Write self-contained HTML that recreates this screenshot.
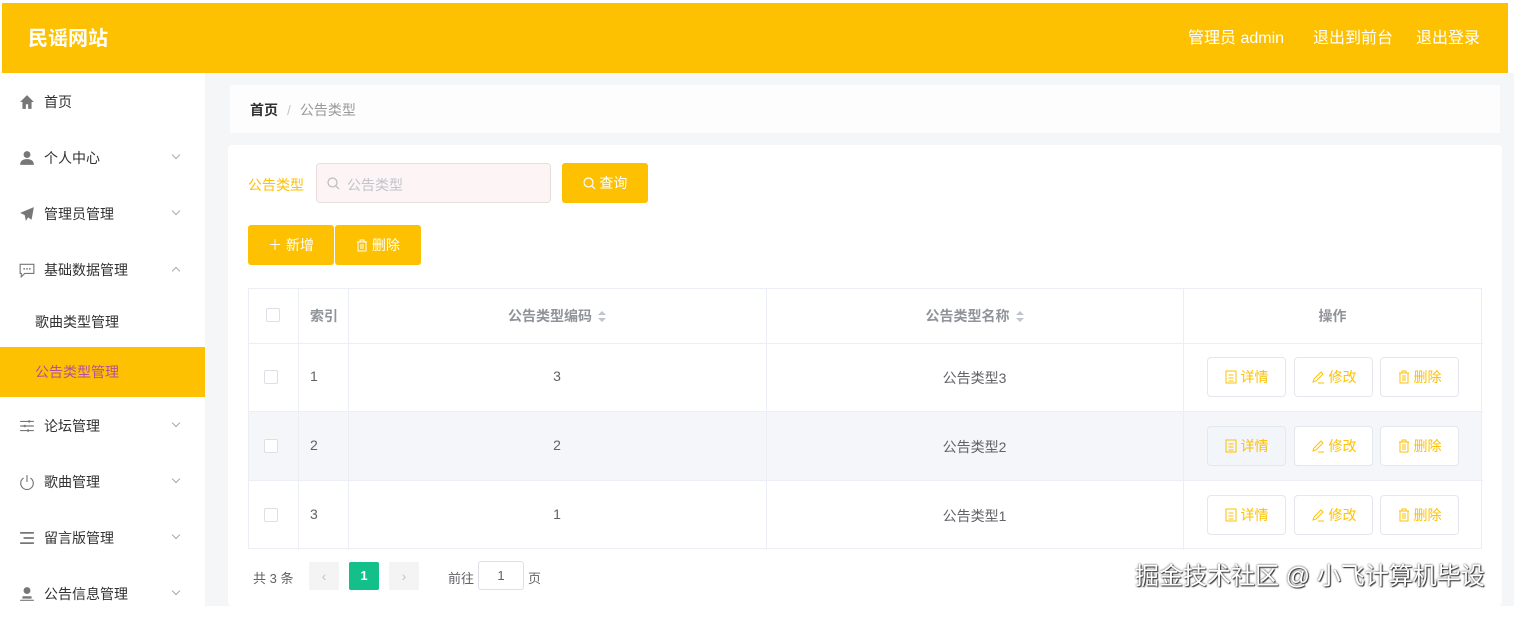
<!DOCTYPE html>
<html><head><meta charset="utf-8"><style>
*{box-sizing:border-box;margin:0;padding:0}
body{width:1514px;height:606px;overflow:hidden;background:#fff;font-family:"Liberation Sans","Noto Sans CJK SC",sans-serif;font-size:14px;color:#606266;position:relative}
.abs{position:absolute}
.hdr{left:2px;top:3px;width:1506px;height:70px;background:#fdc102}
.logo{left:28px;top:22px;color:#fff;font-size:20px;font-weight:bold}
.hr{top:24px;color:#fff;font-size:16px}
.side{left:0;top:73px;width:205px;height:533px;background:#fff}
.mi{position:absolute;left:0;width:205px;height:50px;line-height:50px;color:#303133;font-size:14px}
.mi .ic{position:absolute;left:19px;top:17px;width:16px;height:16px}
.mi .t{position:absolute;left:44px}
.mi .ar{position:absolute;left:173px;top:19px;width:6px;height:6px;border-right:1px solid #aaa;border-bottom:1px solid #aaa;transform:rotate(45deg)}
.mi .up{transform:rotate(-135deg);top:23px}
.main{left:205px;top:73px;width:1309px;height:533px;background:#f5f6f8}
.bc{left:230px;top:85px;width:1270px;height:48px;background:#fdfdfe}
.card{left:228px;top:145px;width:1274px;height:461px;background:#fff;border-radius:4px}
.btn{position:absolute;background:#fdc102;color:#fff;border-radius:3px;text-align:center;font-size:14px}
.tbl{left:248px;top:288px;width:1234px;height:261px;border:1px solid #ebeef5}
.vl{position:absolute;top:0;width:1px;height:261px;background:#ebeef5}
.hl{position:absolute;left:0;width:1234px;height:1px;background:#ebeef5}
.cb{position:absolute;width:14px;height:14px;border:1px solid #dcdfe6;border-radius:2px;background:#fff}
.cell{position:absolute;font-size:14px;color:#606266}
.ob{position:absolute;width:79px;height:40px;border:1px solid #e4e7ed;border-radius:4px;background:#fff;color:#fdc102;font-size:14px;line-height:38px;text-align:center}
.ob svg{vertical-align:-2px;margin-right:4px}
.sort{display:inline-block;vertical-align:middle;margin-left:6px;width:8px;height:12px;position:relative}
.sort:before{content:"";position:absolute;left:0;top:0;border:4px solid transparent;border-bottom:4px solid #c0c4cc;border-top:0}
.sort:after{content:"";position:absolute;left:0;top:7px;border:4px solid transparent;border-top:4px solid #c0c4cc;border-bottom:0}
</style></head><body>
<div class="abs hdr"></div>
<div class="abs logo">民谣网站</div>
<div class="abs hr" style="left:1188px">管理员 admin</div>
<div class="abs hr" style="left:1313px">退出到前台</div>
<div class="abs hr" style="left:1416px">退出登录</div>

<div class="abs side">
<div class="mi" style="top:4px"><svg class="ic" viewBox="0 0 14 14"><path d="M7 1L1 7h2v6h3V9h2v4h3V7h2z" fill="#777"/></svg><span class="t">首页</span></div>
<div class="mi" style="top:60px"><svg class="ic" viewBox="0 0 14 14"><circle cx="7" cy="4" r="3" fill="#777"/><path d="M1 13c0-4 3-5 6-5s6 1 6 5z" fill="#777"/></svg><span class="t">个人中心</span><i class="ar"></i></div>
<div class="mi" style="top:116px"><svg class="ic" viewBox="0 0 14 14"><path d="M13 1L1 6l4 2 1 5 2-3 3 2z" fill="#777"/></svg><span class="t">管理员管理</span><i class="ar"></i></div>
<div class="mi" style="top:172px"><svg class="ic" viewBox="0 0 14 14"><path d="M1 2h12v8H5l-3 3V10H1z" fill="none" stroke="#777"/><circle cx="4.5" cy="6" r=".8" fill="#777"/><circle cx="7" cy="6" r=".8" fill="#777"/><circle cx="9.5" cy="6" r=".8" fill="#777"/></svg><span class="t">基础数据管理</span><i class="ar up"></i></div>
<div class="mi" style="top:224px"><span class="t" style="left:35px">歌曲类型管理</span></div>
<div class="mi" style="top:274px;background:#fdc102;color:#b450a0"><span class="t" style="left:35px">公告类型管理</span></div>
<div class="mi" style="top:328px"><svg class="ic" viewBox="0 0 14 14"><path d="M1 3h12M1 7h12M1 11h12" stroke="#777"/><path d="M9 2v2M5 6v2M8 10v2" stroke="#777" stroke-width="1.5"/></svg><span class="t">论坛管理</span><i class="ar"></i></div>
<div class="mi" style="top:384px"><svg class="ic" viewBox="0 0 14 14"><path d="M4 3.5A5.5 5.5 0 1 0 10 3.5" fill="none" stroke="#777"/><path d="M7 1v6" stroke="#777"/></svg><span class="t">歌曲管理</span><i class="ar"></i></div>
<div class="mi" style="top:440px"><svg class="ic" viewBox="0 0 14 14"><path d="M1 2.5h12M4 7h9M1 11.5h12" stroke="#777" stroke-width="1.6"/></svg><span class="t">留言版管理</span><i class="ar"></i></div>
<div class="mi" style="top:496px"><svg class="ic" viewBox="0 0 14 14"><circle cx="7" cy="4" r="3" fill="#777"/><path d="M3 9h8v2H3zM1 12h12v1H1z" fill="#777"/></svg><span class="t">公告信息管理</span><i class="ar"></i></div>
</div>

<div class="abs main"></div>
<div class="abs bc"></div>
<div class="abs" style="left:250px;top:100px;font-size:14px"><b style="color:#303133">首页</b><span style="color:#c0c4cc;margin:0 9px">/</span><span style="color:#999">公告类型</span></div>
<div class="abs card"></div>

<div class="abs" style="left:248px;top:175px;color:#fdc102;font-size:14px">公告类型</div>
<div class="abs" style="left:316px;top:163px;width:235px;height:40px;background:#fdf5f5;border:1px solid #e8dede;border-radius:4px"></div>
<svg class="abs" style="left:327px;top:177px" width="13" height="13" viewBox="0 0 13 13"><circle cx="5.5" cy="5.5" r="4.5" fill="none" stroke="#bbb" stroke-width="1.2"/><path d="M9 9l3 3" stroke="#bbb" stroke-width="1.2"/></svg>
<div class="abs" style="left:347px;top:175px;color:#c0c4cc;font-size:14px">公告类型</div>
<div class="btn" style="left:562px;top:163px;width:86px;height:40px;line-height:40px">
<svg width="13" height="13" viewBox="0 0 13 13" style="vertical-align:-2px"><circle cx="5.5" cy="5.5" r="4.5" fill="none" stroke="#fff" stroke-width="1.2"/><path d="M9 9l3 3" stroke="#fff" stroke-width="1.2"/></svg> 查询</div>
<div class="btn" style="left:248px;top:225px;width:86px;height:40px;line-height:40px">＋ 新增</div>
<div class="btn" style="left:335px;top:225px;width:86px;height:40px;line-height:40px">
<svg width="12" height="13" viewBox="0 0 12 13" style="vertical-align:-2px"><path d="M1 3h10M4 3V1h4v2M2 3v9h8V3M5 5v5M7 5v5" fill="none" stroke="#fff"/></svg> 删除</div>

<div class="abs tbl">
<div class="vl" style="left:49px"></div><div class="vl" style="left:99px"></div><div class="vl" style="left:517px"></div><div class="vl" style="left:934px"></div>
<div class="hl" style="top:54px"></div><div class="hl" style="top:122px"></div><div class="hl" style="top:191px"></div>
<div class="abs" style="left:0;top:123px;width:1232px;height:68px;background:#f4f6f9"></div>
<div class="abs" style="left:49px;top:123px;width:1px;height:68px;background:#ebeef5"></div><div class="abs" style="left:99px;top:123px;width:1px;height:68px;background:#ebeef5"></div><div class="abs" style="left:517px;top:123px;width:1px;height:68px;background:#ebeef5"></div><div class="abs" style="left:934px;top:123px;width:1px;height:68px;background:#ebeef5"></div>
</div>
<div class="cb" style="left:266px;top:308px"></div>
<div class="cell" style="left:310px;top:306px;font-weight:bold;color:#909399">索引</div>
<div class="cell" style="left:348px;width:418px;text-align:center;top:306px;font-weight:bold;color:#909399">公告类型编码<i class="sort"></i></div>
<div class="cell" style="left:766px;width:417px;text-align:center;top:306px;font-weight:bold;color:#909399">公告类型名称<i class="sort"></i></div>
<div class="cell" style="left:1183px;width:299px;text-align:center;top:306px;font-weight:bold;color:#909399">操作</div>

<div class="cb" style="left:264px;top:370px"></div><div class="cell" style="left:310px;top:368px">1</div>
<div class="cell" style="left:348px;width:418px;text-align:center;top:368px">3</div>
<div class="cell" style="left:766px;width:417px;text-align:center;top:368px">公告类型3</div>
<div class="cb" style="left:264px;top:439px"></div><div class="cell" style="left:310px;top:437px">2</div>
<div class="cell" style="left:348px;width:418px;text-align:center;top:437px">2</div>
<div class="cell" style="left:766px;width:417px;text-align:center;top:437px">公告类型2</div>
<div class="cb" style="left:264px;top:508px"></div><div class="cell" style="left:310px;top:506px">3</div>
<div class="cell" style="left:348px;width:418px;text-align:center;top:506px">1</div>
<div class="cell" style="left:766px;width:417px;text-align:center;top:506px">公告类型1</div>

<svg width="0" height="0" style="position:absolute"><defs>
<symbol id="doc" viewBox="0 0 12 14"><path d="M1 1h10v12H1zM3.5 5h5M3.5 8h5M3.5 11h5" fill="none" stroke="#fdc102"/></symbol>
<symbol id="pen" viewBox="0 0 14 14"><path d="M2 12l1-3 7-7 2 2-7 7zM7 13h6" fill="none" stroke="#fdc102"/></symbol>
<symbol id="bin" viewBox="0 0 12 14"><path d="M1 3h10M4 3V1h4v2M2 3v10h8V3M5 5v6M7 5v6" fill="none" stroke="#fdc102"/></symbol>
</defs></svg>
<div class="ob" style="left:1207px;top:357px"><svg width="12" height="14"><use href="#doc"/></svg>详情</div><div class="ob" style="left:1294px;top:357px"><svg width="14" height="14"><use href="#pen"/></svg>修改</div><div class="ob" style="left:1380px;top:357px"><svg width="12" height="14"><use href="#bin"/></svg>删除</div>
<div class="ob" style="left:1207px;top:426px;background:#f2f5f9"><svg width="12" height="14"><use href="#doc"/></svg>详情</div><div class="ob" style="left:1294px;top:426px"><svg width="14" height="14"><use href="#pen"/></svg>修改</div><div class="ob" style="left:1380px;top:426px"><svg width="12" height="14"><use href="#bin"/></svg>删除</div>
<div class="ob" style="left:1207px;top:495px"><svg width="12" height="14"><use href="#doc"/></svg>详情</div><div class="ob" style="left:1294px;top:495px"><svg width="14" height="14"><use href="#pen"/></svg>修改</div><div class="ob" style="left:1380px;top:495px"><svg width="12" height="14"><use href="#bin"/></svg>删除</div>

<div class="abs" style="left:253px;top:568px;font-size:13px;color:#606266">共 3 条</div>
<div class="abs" style="left:309px;top:562px;width:30px;height:28px;background:#f4f4f5;color:#c0c4cc;text-align:center;line-height:28px;border-radius:2px">‹</div>
<div class="abs" style="left:349px;top:562px;width:30px;height:28px;background:#13c08a;color:#fff;text-align:center;line-height:28px;font-weight:bold;font-size:13px;border-radius:2px">1</div>
<div class="abs" style="left:389px;top:562px;width:30px;height:28px;background:#f4f4f5;color:#c0c4cc;text-align:center;line-height:28px;border-radius:2px">›</div>
<div class="abs" style="left:448px;top:568px;font-size:13px">前往</div>
<div class="abs" style="left:478px;top:561px;width:46px;height:29px;border:1px solid #dcdfe6;border-radius:3px;text-align:center;line-height:27px;font-size:13px">1</div>
<div class="abs" style="left:528px;top:568px;font-size:13px">页</div>

<div class="abs" style="left:1135px;top:556px;font-size:24px;color:#fff;text-shadow:0 0 2px #333,1px 1px 1px #333;white-space:nowrap">掘金技术社区 @ 小飞计算机毕设</div>
</body></html>
